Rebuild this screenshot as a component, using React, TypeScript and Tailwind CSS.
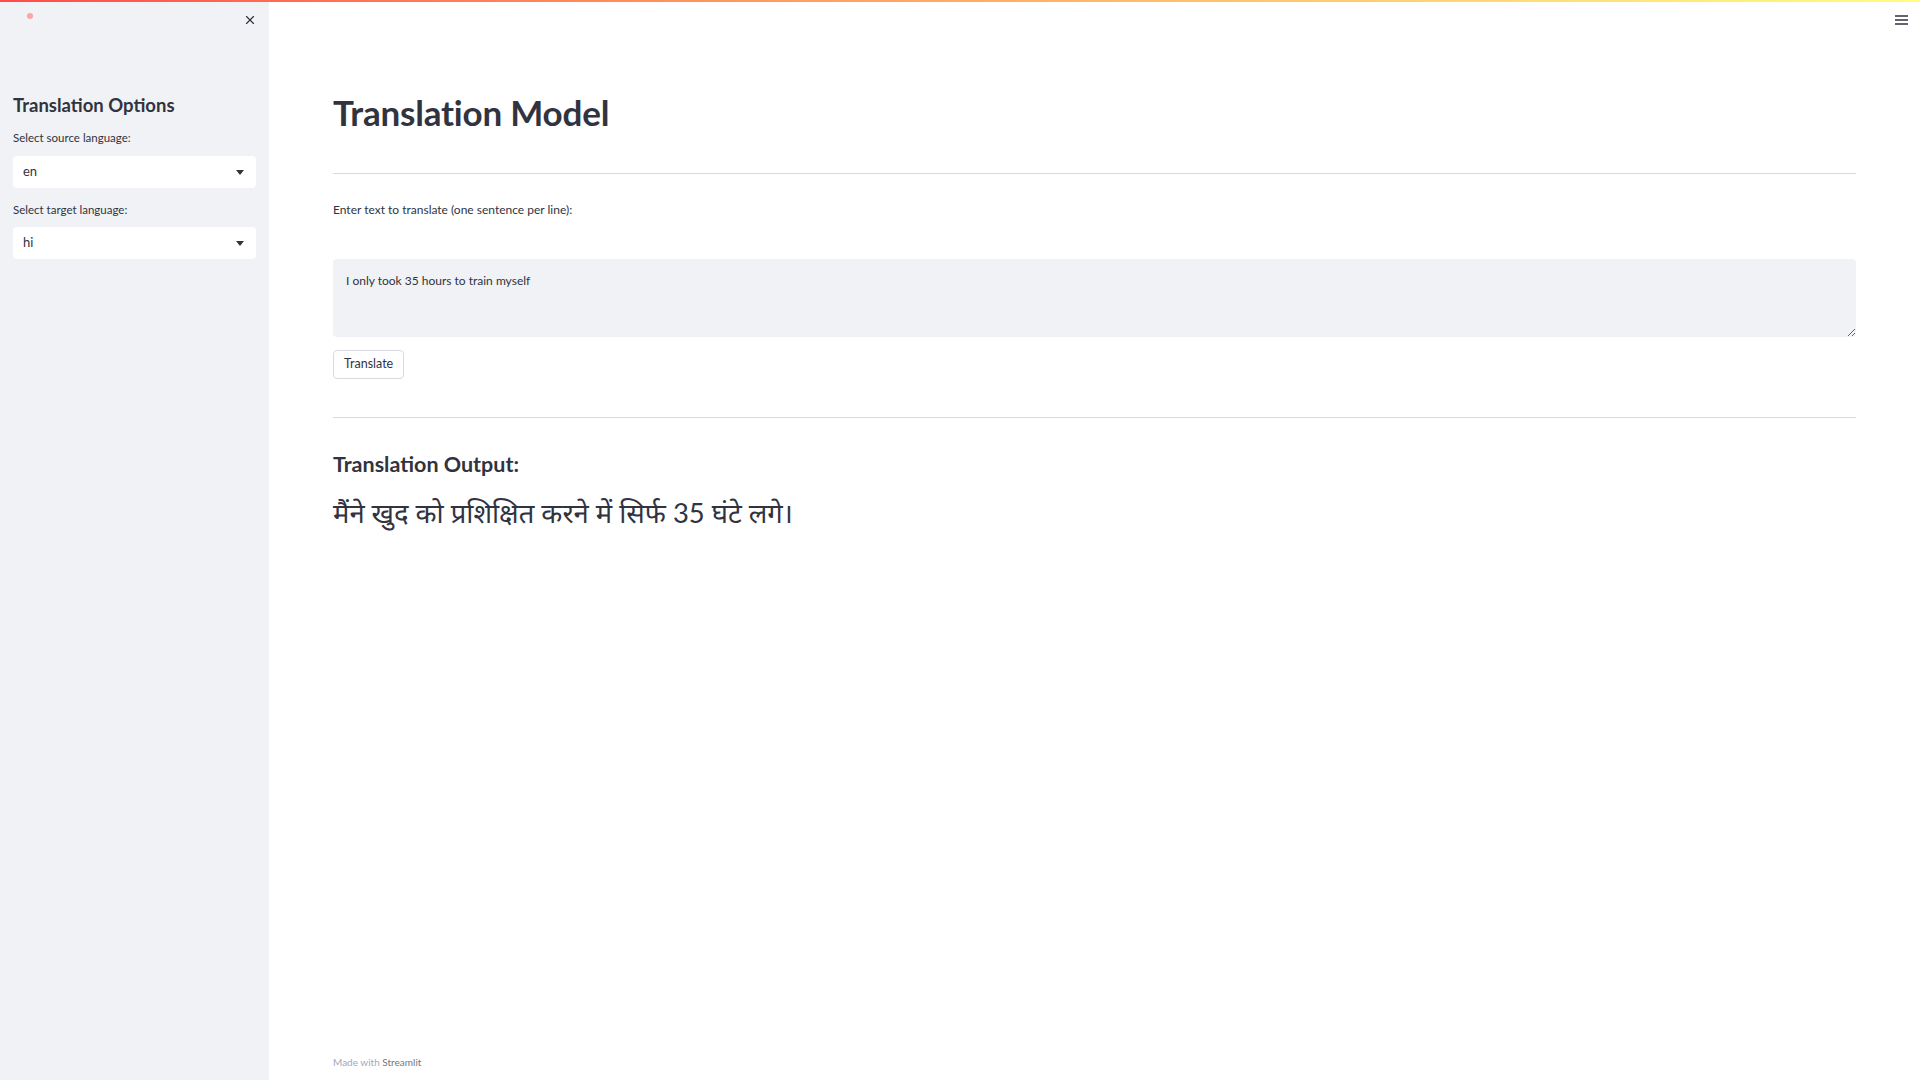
import { X } from "lucide-react";

const font = { fontFamily: "Lato, 'Noto Sans', sans-serif" };

function SelectBox({ value }: { value: string }) {
    return (
        <div className="flex h-[32px] items-center justify-between rounded-[4px] bg-white pl-[10px] pr-[12px] text-[13px] text-[#31333f]">
            <span>{value}</span>
            <svg width="8" height="5" viewBox="0 0 8 5" className="text-[#31333f]">
                <path d="M0 0h8L4 5z" fill="currentColor" />
            </svg>
        </div>
    );
}

export default function App() {
    return (
        <div className="flex h-[1080px] w-[1920px] flex-col overflow-hidden bg-white text-[#31333f]" style={font}>
            {/* decoration bar */}
            <div className="h-[2px] w-full bg-gradient-to-r from-[#ff4b4b] to-[#fffd80]" />

            <div className="flex flex-1">
                {/* Sidebar */}
                <aside className="flex w-[269px] shrink-0 flex-col bg-[#f0f2f6] px-[13px]">
                    <div className="flex h-[36px] items-center justify-between">
                        <span className="ml-[14px] mt-[-8px] h-[6px] w-[6px] rounded-full bg-[#ffa3a3]" />
                        <X className="mr-[-1px] h-[14px] w-[14px]" strokeWidth={2} />
                    </div>
                    <h2 className="mt-[55px] text-[18.5px] font-bold leading-[24px]">Translation Options</h2>
                    <label className="mt-[13px] text-[11.5px] leading-[16px]">Select source language:</label>
                    <div className="mt-[10px]">
                        <SelectBox value="en" />
                    </div>
                    <label className="mt-[14px] text-[11.5px] leading-[16px]">Select target language:</label>
                    <div className="mt-[9px]">
                        <SelectBox value="hi" />
                    </div>
                </aside>

                {/* Main */}
                <main className="relative flex flex-1 flex-col px-[64px]">
                    <button className="absolute right-[12px] top-[13px]">
                        <svg width="13" height="10" viewBox="0 0 13 10">
                            <path d="M0 1h13M0 5h13M0 9h13" stroke="#31333f" strokeWidth="1.6" />
                        </svg>
                    </button>

                    <h1 className="mt-[88px] text-[35px] font-bold leading-[44px] tracking-[-0.2px]">Translation Model</h1>
                    <hr className="mt-[39px] border-t border-[#d9dadd]" />

                    <label className="mt-[27px] text-[12px] leading-[17px]">Enter text to translate (one sentence per line):</label>
                    <textarea
                        readOnly
                        defaultValue="I only took 35 hours to train myself"
                        className="mt-[41px] h-[78px] w-full resize-y rounded-[4px] bg-[#f0f2f6] px-[13px] py-[13px] text-[12px] leading-[18px] text-[#31333f] outline-none"
                    />
                    <div className="mt-[13px]">
                        <button className="h-[29px] rounded-[4px] border border-[#d9dadd] bg-white px-[10px] text-[12.5px] text-[#31333f]">
                            Translate
                        </button>
                    </div>
                    <hr className="mt-[38px] border-t border-[#d9dadd]" />

                    <h3 className="mt-[32px] text-[21.5px] font-bold leading-[28px]">Translation Output:</h3>
                    <p className="mt-[15px] text-[27.4px] leading-[40px]">मैंने खुद को प्रशिक्षित करने में सिर्फ 35 घंटे लगे।</p>

                    <footer className="mt-auto pb-[11px] text-[10px] leading-[14px] text-[#a3a8b8]">
                        Made with <span className="text-[#737682]">Streamlit</span>
                    </footer>
                </main>
            </div>
        </div>
    );
}
